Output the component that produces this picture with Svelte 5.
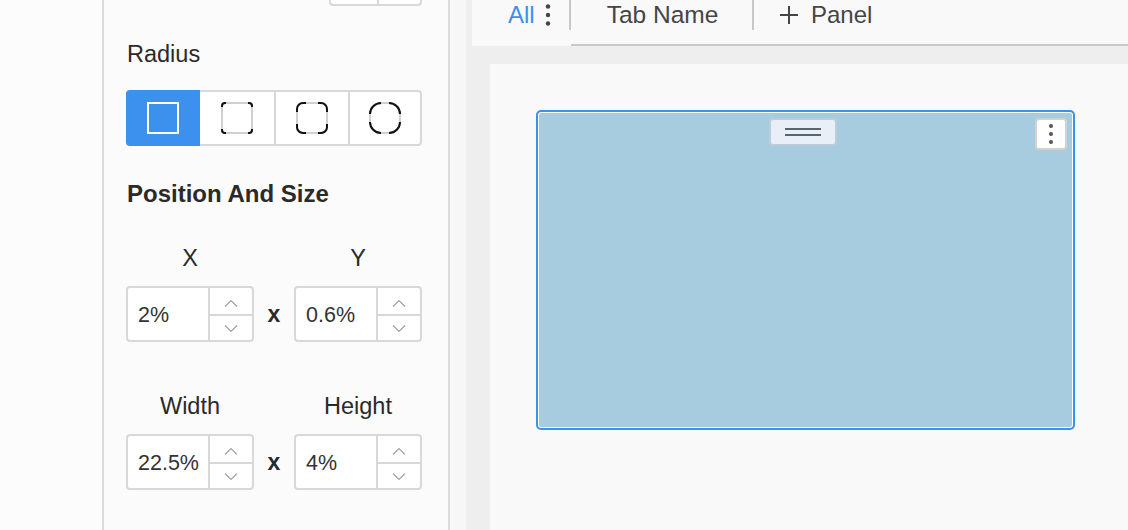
<script>
  const radii = [
    { r: 0, a: 0 },
    { r: 3, a: 6 },
    { r: 6, a: 11 },
    { r: 11, a: 13 },
  ];
  const rows = [
    [{ label: "X", value: "2%" }, { label: "Y", value: "0.6%" }],
    [{ label: "Width", value: "22.5%" }, { label: "Height", value: "4%" }],
  ];

  // black corners on top of the grey square
  function corner(r, a) {
    const b = 34 - a;
    const arc = `A${r} ${r} 0 0 1`;
    return [
      `M2 ${a}V${2 + r}${arc} ${2 + r} 2H${a}`,
      `M${b} 2H${32 - r}${arc} 32 ${2 + r}V${a}`,
      `M32 ${b}V${32 - r}${arc} ${32 - r} 32H${b}`,
      `M${a} 32H${2 + r}${arc} 2 ${32 - r}V${b}`,
    ].join("");
  }
</script>

<div class="page">
  <div class="left"></div>

  <aside class="panel">
    <div class="stub">
      <span></span>
      <span></span>
    </div>

    <div class="title">Radius</div>
    <div class="radius">
      {#each radii as item, i}
        <button class="opt" class:on={i === 0}>
          <svg width="34" height="34" viewBox="0 0 34 34" fill="none">
            <rect x="2" y="2" width="30" height="30" rx={item.r} stroke={i === 0 ? "#fff" : "#d0d0d0"} stroke-width="2" />
            {#if i > 0}
              <path d={corner(item.r, item.a)} stroke="#111" stroke-width="2" />
            {/if}
          </svg>
        </button>
      {/each}
    </div>

    <h3>Position And Size</h3>

    {#each rows as row}
      <div class="pair">
        {#each row as f, i}
          {#if i === 1}<span class="x">x</span>{/if}
          <div class="field">
            <div class="label">{f.label}</div>
            <div class="stepper">
              <div class="val">{f.value}</div>
              <div class="arrows">
                <div class="arrow">
                  <svg width="14" height="9" viewBox="0 0 14 9" fill="none"><path d="M1 7.5L7 1.5l6 6" stroke="#a0a0a0" stroke-width="1.2" /></svg>
                </div>
                <div class="arrow">
                  <svg width="14" height="9" viewBox="0 0 14 9" fill="none"><path d="M1 1.5L7 7.5l6-6" stroke="#a0a0a0" stroke-width="1.2" /></svg>
                </div>
              </div>
            </div>
          </div>
        {/each}
      </div>
    {/each}
  </aside>

  <div class="gutter"></div>

  <main class="main">
    <nav class="tabs">
      <div class="tab all">
        <span>All</span>
        <svg width="6" height="22" viewBox="0 0 6 22"><circle cx="3" cy="2.5" r="2.2" /><circle cx="3" cy="11" r="2.2" /><circle cx="3" cy="19.5" r="2.2" /></svg>
      </div>
      <div class="tab name">Tab Name</div>
      <div class="tab add">
        <svg width="20" height="20" viewBox="0 0 20 20"><path d="M10 1v18M1 10h18" stroke="#454545" stroke-width="2" /></svg>
        <span>Panel</span>
      </div>
    </nav>

    <div class="canvas">
      <div class="card">
        <div class="handle"><i></i><i></i></div>
        <div class="more">
          <b></b><b></b><b></b>
        </div>
      </div>
    </div>
  </main>
</div>

<style>
  :global(body) {
    margin: 0;
    background: #fbfbfb;
  }

  .page {
    display: flex;
    width: 1128px;
    height: 530px;
    overflow: hidden;
    font-family: "Liberation Sans", Arial, sans-serif;
    color: #2a2a2a;
  }

  .left {
    width: 102px;
    flex: none;
    background: #fcfcfc;
  }

  .panel {
    width: 348px;
    flex: none;
    box-sizing: border-box;
    padding: 0 26px 0 22px;
    background: #fbfbfb;
    border-left: 2px solid #dcdcdc;
    border-right: 2px solid #dcdcdc;
  }

  .stub {
    display: flex;
    justify-content: flex-end;
    height: 6px;
  }

  .stub span {
    box-sizing: border-box;
    width: 48px;
    height: 6px;
    background: #fff;
    border: 2px solid #d8d8d8;
    border-top: 0;
    border-right: 0;
    border-radius: 0 0 0 4px;
  }

  .stub span:last-child {
    width: 45px;
    border-right: 2px solid #d8d8d8;
    border-radius: 0 0 4px 0;
  }

  .title {
    margin-top: 35px;
    padding-left: 1px;
    font-size: 23.5px;
    line-height: 26px;
  }

  .radius {
    display: grid;
    grid-template-columns: 72px 76px 74px 70px;
    box-sizing: border-box;
    width: 296px;
    height: 56px;
    margin-top: 23px;
    background: #fff;
    border: 2px solid #d8d8d8;
    border-radius: 4px;
  }

  .opt {
    display: flex;
    align-items: center;
    justify-content: center;
    padding: 0;
    background: none;
    border: 0;
    border-right: 2px solid #d8d8d8;
  }

  .opt:last-child {
    border-right: 0;
  }

  .opt.on {
    margin: -2px 0 -2px -2px;
    background: #3c91ee;
    border: 0;
    border-radius: 4px 0 0 4px;
  }

  h3 {
    margin: 34px 0 0;
    padding-left: 1px;
    font-size: 24px;
    line-height: 28px;
    font-weight: 700;
  }

  .pair {
    display: flex;
    align-items: flex-end;
    margin-top: 51px;
  }

  h3 + .pair {
    margin-top: 37px;
  }

  .field {
    width: 128px;
  }

  .label {
    margin-bottom: 15px;
    font-size: 23.5px;
    line-height: 26px;
    text-align: center;
  }

  .x {
    width: 40px;
    font-size: 23px;
    font-weight: 700;
    line-height: 56px;
    text-align: center;
  }

  .stepper {
    display: flex;
    box-sizing: border-box;
    height: 56px;
    background: #fff;
    border: 2px solid #d8d8d8;
    border-radius: 4px;
  }

  .val {
    flex: 1;
    padding-left: 10px;
    font-size: 21.5px;
    line-height: 54px;
    color: #333;
  }

  .arrows {
    display: flex;
    flex-direction: column;
    box-sizing: border-box;
    width: 44px;
    border-left: 2px solid #d8d8d8;
  }

  .arrow {
    display: flex;
    height: 26px;
    box-sizing: border-box;
    align-items: center;
    justify-content: center;
  }

  .arrow:first-child {
    padding-top: 4px;
  }

  .arrow + .arrow {
    border-top: 2px solid #d8d8d8;
  }

  .gutter {
    width: 16px;
    flex: none;
    background: #f7f7f7;
  }

  .main {
    flex: 1;
    display: flex;
    flex-direction: column;
    background: #eeeeee;
    border-left: 6px solid #eeeeee;
  }

  .tabs {
    display: flex;
    align-items: flex-start;
    height: 46px;
    box-sizing: border-box;
    background: #f9f9f9;
    font-size: 24px;
    color: #454545;
    position: relative;
  }

  .tabs::after {
    content: "";
    position: absolute;
    left: 99px;
    right: 0;
    bottom: 0;
    height: 2px;
    background: #c8c8c8;
  }

  .tab {
    display: flex;
    align-items: center;
    box-sizing: border-box;
    height: 30px;
    line-height: 30px;
    border-right: 2px solid #c8c8c8;
  }

  .all {
    width: 99px;
    padding-left: 36px;
    gap: 10px;
    color: #3c91ee;
  }

  .all svg {
    fill: #454545;
  }

  .name {
    width: 183px;
    padding-left: 2px;
    justify-content: center;
    font-size: 24.5px;
  }

  .add {
    gap: 12px;
    padding-left: 25px;
    border: 0;
  }

  .canvas {
    flex: 1;
    margin: 18px 0 0 18px;
    padding: 46px 0 0 46px;
    background: #f9f9f9;
  }

  .card {
    position: relative;
    box-sizing: border-box;
    width: 539px;
    height: 320px;
    background: #a8ccdf;
    border: 2px solid #3c91ee;
    box-shadow: inset 0 0 0 1px #fff;
    border-radius: 5px;
  }

  .handle {
    position: absolute;
    top: 6px;
    left: 231px;
    display: flex;
    flex-direction: column;
    align-items: center;
    justify-content: center;
    gap: 4px;
    box-sizing: border-box;
    width: 68px;
    height: 28px;
    background: #e8eff6;
    border: 2px solid #bccdd8;
    border-radius: 4px;
  }

  .handle i {
    display: block;
    width: 36px;
    height: 2px;
    background: #56666f;
  }

  .more {
    position: absolute;
    top: 6px;
    right: 6px;
    display: flex;
    flex-direction: column;
    align-items: center;
    justify-content: center;
    gap: 4px;
    box-sizing: border-box;
    width: 32px;
    height: 32px;
    background: #fff;
    border: 2px solid #d2d2d2;
    border-radius: 4px;
  }

  .more b {
    display: block;
    width: 4px;
    height: 4px;
    background: #555;
    border-radius: 50%;
  }
</style>
